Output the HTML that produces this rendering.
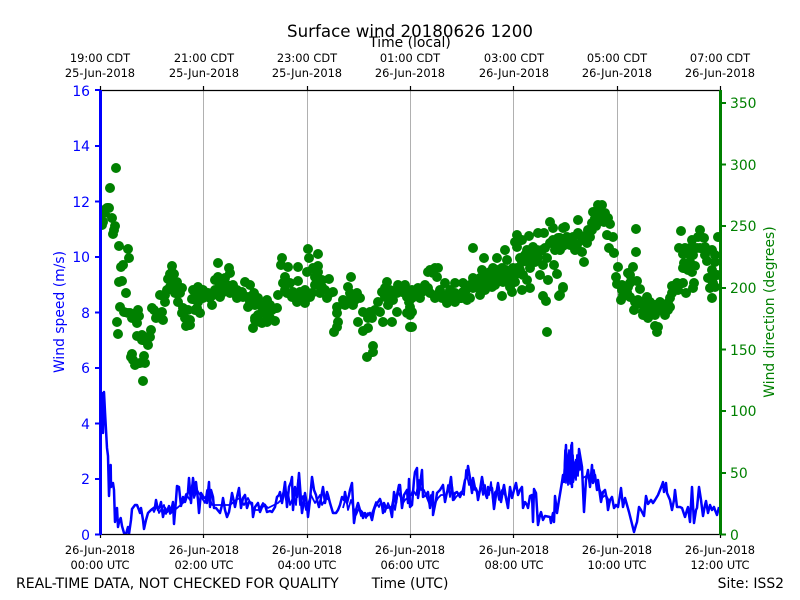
<!DOCTYPE html>
<html><head><meta charset="utf-8"><style>
html,body{margin:0;padding:0;background:#fff}
svg{display:block}
text{font-family:"DejaVu Sans","Liberation Sans",sans-serif}
</style></head><body>
<svg width="800" height="600" viewBox="0 0 800 600" xmlns="http://www.w3.org/2000/svg">
<defs><clipPath id="c"><rect x="100" y="90" width="620" height="444.5"/></clipPath></defs>
<rect width="800" height="600" fill="#fff"/>
<g stroke="#b0b0b0" stroke-width="1"><path d="M203.5 90V534M307.5 90V534M410.5 90V534M513.5 90V534M617.5 90V534"/></g>
<g clip-path="url(#c)">
<path fill="none" stroke="#008000" stroke-width="10" stroke-linecap="round" d="M102 225h0M105 213h0M107 208h0M109 208h0M112 218h0M115 226h0M113 234h0M102 218h0M103 222h0M104 210h0M114 230h0M116 168h0M110 188h0M119 246h0M128 249h0M129 258h0M123 265h0M121 267h0M119 282h0M122 281h0M126 293h0M120 307h0M117 322h0M118 334h0M128 313h0M124 312h0M130 313h0M138 310h0M139 316h0M132 318h0M137 323h0M135 316h0M137 336h0M142 335h0M145 337h0M151 330h0M150 337h0M148 345h0M142 340h0M132 354h0M131 357h0M133 360h0M135 365h0M144 356h0M145 363h0M140 363h0M143 381h0M152 308h0M154 310h0M156 318h0M163 320h0M162 312h0M165 302h0M160 295h0M165 295h0M167 290h0M172 266h0M172 272h0M170 274h0M174 274h0M168 279h0M173 279h0M177 282h0M170 287h0M175 287h0M182 288h0M175 293h0M180 293h0M178 302h0M183 308h0M182 313h0M188 310h0M185 318h0M190 320h0M186 326h0M190 325h0M188 320h0M192 299h0M193 290h0M198 287h0M197 293h0M203 290h0M198 302h0M200 313h0M197 308h0M195 310h0M203 298h0M208 293h0M212 305h0M210 298h0M215 290h0M215 280h0M218 277h0M218 263h0M220 285h0M223 290h0M220 297h0M227 285h0M229 268h0M230 273h0M225 278h0M233 285h0M230 293h0M237 298h0M237 290h0M245 282h0M250 285h0M242 292h0M243 297h0M248 307h0M252 302h0M248 297h0M255 305h0M253 328h0M255 318h0M254 293h0M250 302h0M260 305h0M267 300h0M268 305h0M263 310h0M272 310h0M277 308h0M278 295h0M285 277h0M283 283h0M290 283h0M298 281h0M282 258h0M281 265h0M288 267h0M298 267h0M287 293h0M293 292h0M300 292h0M305 290h0M312 293h0M297 302h0M305 303h0M292 297h0M308 249h0M309 258h0M318 254h0M318 266h0M313 268h0M307 272h0M318 272h0M315 277h0M322 280h0M329 279h0M322 287h0M325 290h0M333 292h0M328 295h0M327 298h0M258 315h0M255 320h0M267 317h0M262 323h0M270 318h0M275 321h0M267 322h0M351 277h0M348 287h0M343 300h0M350 293h0M357 293h0M360 298h0M350 300h0M353 305h0M337 307h0M338 322h0M337 327h0M334 332h0M337 313h0M358 322h0M363 312h0M370 312h0M375 310h0M368 318h0M363 331h0M368 328h0M373 346h0M373 352h0M367 357h0M378 302h0M382 292h0M387 282h0M385 288h0M390 290h0M398 285h0M397 293h0M405 285h0M407 293h0M393 300h0M388 305h0M397 312h0M383 322h0M392 322h0M407 313h0M409 302h0M410 327h0M405 286h0M407 297h0M410 307h0M412 312h0M410 315h0M412 327h0M415 292h0M418 288h0M425 285h0M420 298h0M428 288h0M430 270h0M435 268h0M438 268h0M428 272h0M437 277h0M433 273h0M473 248h0M445 283h0M440 290h0M435 298h0M447 303h0M447 295h0M455 283h0M463 283h0M455 302h0M455 293h0M467 300h0M463 292h0M473 278h0M470 298h0M473 288h0M480 295h0M482 270h0M480 278h0M484 258h0M487 275h0M487 283h0M492 287h0M493 268h0M497 258h0M495 277h0M502 268h0M505 250h0M507 260h0M503 275h0M502 296h0M512 292h0M508 280h0M513 268h0M517 268h0M510 287h0M515 282h0M522 290h0M530 288h0M527 280h0M523 275h0M530 268h0M520 258h0M525 255h0M533 255h0M537 250h0M533 247h0M542 250h0M538 257h0M517 235h0M515 242h0M522 240h0M517 247h0M529 236h0M538 233h0M544 233h0M550 222h0M553 228h0M563 228h0M550 243h0M558 245h0M558 238h0M563 242h0M547 258h0M543 265h0M540 275h0M554 265h0M557 274h0M548 280h0M543 296h0M546 301h0M547 332h0M559 296h0M563 287h0M578 220h0M565 227h0M560 238h0M567 237h0M573 237h0M578 233h0M560 250h0M570 245h0M577 245h0M582 252h0M587 243h0M590 237h0M588 230h0M592 223h0M584 262h0M595 218h0M593 212h0M598 205h0M602 205h0M600 212h0M605 213h0M608 218h0M610 224h0M607 235h0M613 237h0M609 248h0M614 253h0M636 229h0M636 252h0M618 267h0M616 277h0M617 284h0M622 285h0M628 287h0M625 288h0M633 267h0M628 273h0M630 275h0M637 281h0M640 289h0M621 300h0M623 295h0M630 297h0M638 300h0M647 297h0M634 310h0M643 312h0M643 315h0M652 314h0M645 305h0M655 305h0M660 302h0M668 303h0M670 307h0M665 315h0M662 308h0M655 326h0M658 327h0M657 332h0M672 286h0M677 283h0M672 293h0M678 290h0M683 283h0M686 293h0M694 283h0M693 288h0M681 231h0M679 248h0M683 254h0M692 240h0M690 248h0M693 255h0M700 230h0M698 237h0M704 238h0M697 248h0M705 247h0M684 263h0M683 268h0M688 270h0M692 272h0M695 266h0M718 237h0M712 250h0M707 261h0M715 255h0M715 262h0M717 275h0M708 278h0M713 277h0M710 288h0M715 287h0M712 298h0M563 288h0M560 295h0M622 290h0M650 308h0M655 315h0M640 304h0M648 318h0M668 310h0M670 298h0"/>
<path fill="none" stroke="#008000" stroke-width="10" stroke-linecap="round" d="M205 293h0M213 295h0M222 293h0M228 290h0M240 295h0M258 298h0M265 312h0M270 305h0M260 322h0M285 290h0M295 296h0M303 297h0M310 297h0M315 285h0M320 293h0M345 305h0M355 300h0M372 318h0M380 312h0M385 297h0M392 296h0M402 292h0M412 290h0M412 298h0M422 292h0M430 293h0M438 294h0M442 298h0M450 300h0M450 290h0M458 298h0M462 298h0M466 290h0M470 285h0M476 287h0M478 282h0M482 287h0M485 290h0M490 280h0M490 272h0M495 285h0M498 278h0M498 270h0M503 282h0M506 270h0M510 275h0M515 275h0M520 270h0M522 262h0M528 262h0M535 262h0M527 250h0M545 248h0M553 240h0M555 250h0M563 246h0M568 243h0M572 242h0M575 250h0M582 240h0M585 236h0M592 230h0M596 226h0M600 220h0M604 222h0M650 302h0M655 310h0M660 310h0M665 308h0M648 310h0M643 305h0M635 302h0M627 292h0M630 283h0M690 262h0M690 255h0M700 248h0M705 255h0M685 248h0M712 270h0M713 283h0"/>
<g fill="none" stroke="#0000ff" stroke-width="2.5" stroke-linejoin="round">
<polyline points="100.5,367 101,433 102,393 103,433 104,392 105,412 107,448 108,456 109,496 110.7,465 111,487 113,483 114,490 115,522 116,515 117,508 118,527 119,522 120.7,518 122,526 124,533 126,534 128,527 129,534 131,520 132,509 135,505 137,505 139,510 140,513 141,508 143,520 144,529 146,520 148,513 151,510 155,507 156,500 158,510 160,506 161,502 163,517 165,508 167,512 169,506 171,512 173,502 174,524 176,500 177,486 179,487 181,506 183,497 185,502 187,496 188,492 189,478 191,503 193,478 195,493 196,482 198,500 199,513 201,493 204,498 206,497 207,503 209,482 210,507 211,490 213,497 214,508 216,508 220,513 222,505 223,498 225,510 227,517 229,512 231,500 232,493 234,502 235,507 237,497 239,488 241,508 243,498 245,495 247,508 249,502 252,503 253,517 255,507 258,503 260,512 262,507 265,505 267,512 270,511 272,512 275,507 277,497 279,495 280,492 282,503 283,497 285,482 287,507 289,487 291,482 292,477 293,510 295,487 297,497 299,473 301,500 302,513 304,500 305,493 307,505 308,517 310,500 312,477 314,490 316,495 317,500 319,507 321,498 323,487 325,503 327,492 328,495 330,503 333,513 336,513 338,510 340,505 342,497 344,500 345,492 347,503 349,495 350,490 352,483 354,523 356,510 358,503 360,510 362,512 363,518 365,513 367,516 370,513 372,520 374,510 375,507 378,502 380,499 382,505 383,513 384,503 386,508 390,507 392,517 394,492 396,503 397,495 399,485 400,485 402,508 404,495 407,490 408,503 409,479 410,507 412,505 414,480 415,472 417,468 418,498 420,485 422,470 423,497 426,495 428,492 430,508 432,497 433,492 433,515 436,500 437,493 440,490 443,485 445,502 447,492 449,490 451,477 453,500 455,493 457,492 460,497 463,490 465,480 467,476 468,466 470,478 472,493 473,478 475,488 477,492 478,500 480,490 482,477 484,490 487,498 488,487 490,490 492,488 494,509 496,495 498,483 500,495 501,502 503,490 504,485 506,498 508,508 510,487 512,498 514,490 516,483 518,495 520,490 522,487 523,508 525,502 527,505 528,508 530,496 532,495 533,522 534,489 536,493 538,525 540,515 541,512 543,520 545,516 550,517 551,523 553,513 554,522 555,496 557,513 559,500 562,482 563,475 564,482 566,445 567,480 569,453 571,475 572,487 572,443 573,482 575,470 576,460 578,472 579,449 582,467 583,490 584,512 586,480 588,470 590,487 592,465 593,483 595,475 597,490 598,480 600,495 601,502 603,492 605,490 607,500 608,510 610,500 612,497 614,508 616,505 618,507 620,495 621,488 623,507 625,498 627,505 629,512 632,524 634,532 636,525 637,522 639,507 641,510 644,516 646,496 648,504 651,500 653,503 655,500 658,495 660,490 662,485 663,482 664,492 666,483 667,493 670,500 672,510 674,500 675,490 677,507 680,507 682,508 685,517 687,510 688,507 690,522 692,487 694,523 696,510 697,508 699,487 701,500 703,516 705,505 706,501 708,513 710,505 712,510 714,507 715,510 717,515 719,507"/>
<polyline stroke-width="1.8" points="564,480 565,450 566,483 567,455 568,485 569,450 570,484 571,445 572,484 573,455 574,478 575,462 576,480 577,455 578,476 579,452 580,470 581,464 583,478 588,475 591,478 594,470 596,484 599,488 603,497 606,495 610,503"/>
<polyline stroke-width="1.8" points="152,508 154,512 157,505 159,513 164,505 166,514 168,508 170,514 183,503 186,494 190,500 192,485 194,498 197,490 205,503 207,490 212,505 230,505 236,500 240,498 244,505 248,498 254,510 259,510 263,503 268,508 278,503 281,500 284,490 286,500 288,492 290,505 294,495 296,505 298,480 300,505 303,496 306,510 311,495 315,503 320,495 322,505 326,498 329,500"/>
<polyline stroke-width="1.8" points="343,508 346,497 348,510 351,500 356,515 359,508 361,516 364,513 366,518 368,513 371,516 376,502 379,507 381,502 385,512 388,503 391,510 393,500 395,510 398,492 401,498 403,503 405,500 411,495 413,490 416,495 419,480 421,490 424,490 427,498 429,503 431,495 434,505 438,498 441,495 444,495 446,497 448,485 450,497 452,485 454,500 456,497 458,495 461,492 464,495 466,470 469,485 471,480 474,490 476,488 479,495 481,485 483,495 485,485 486,495 489,495 491,482 493,500 495,492 497,490 499,500 502,490 505,495 507,503 509,495 511,490"/>
</g>
</g>
<g stroke="#000" stroke-width="1.2" fill="none"><path d="M100 90.5H720M100 534.5H720M100.5 86V90M203.5 86V90M307.5 86V90M410.5 86V90M513.5 86V90M617.5 86V90M720.5 86V90M100.5 534V538M203.5 534V538M307.5 534V538M410.5 534V538M513.5 534V538M617.5 534V538M720.5 534V538"/></g>
<path stroke="#0000ff" stroke-width="3" fill="none" d="M100.5 90V535"/>
<path stroke="#0000ff" stroke-width="2" fill="none" d="M95 90H100M95 146H100M95 201.500H100M95 257H100M95 312.500H100M95 368H100M95 423.500H100M95 479H100M95 534.500H100"/>
<path stroke="#008000" stroke-width="3" fill="none" d="M720.500 90V535"/>
<path stroke="#008000" stroke-width="2" fill="none" d="M721 103H726M721 164.500H726M721 226H726M721 288H726M721 349.500H726M721 411H726M721 473H726M721 534.500H726"/>
<g font-size="16.670" fill="#000" text-anchor="middle"><text x="410" y="37">Surface wind 20180626 1200</text></g>
<g font-size="13.900" fill="#000" text-anchor="middle"><text x="410" y="47">Time (local)</text><text x="410" y="588">Time (UTC)</text></g>
<g font-size="11.400" fill="#000" text-anchor="middle">
<text x="100" y="62">19:00 CDT</text><text x="100" y="77">25-Jun-2018</text>
<text x="204" y="62">21:00 CDT</text><text x="204" y="77">25-Jun-2018</text>
<text x="307" y="62">23:00 CDT</text><text x="307" y="77">25-Jun-2018</text>
<text x="410" y="62">01:00 CDT</text><text x="410" y="77">26-Jun-2018</text>
<text x="514" y="62">03:00 CDT</text><text x="514" y="77">26-Jun-2018</text>
<text x="617" y="62">05:00 CDT</text><text x="617" y="77">26-Jun-2018</text>
<text x="720" y="62">07:00 CDT</text><text x="720" y="77">26-Jun-2018</text>
<text x="100" y="554">26-Jun-2018</text><text x="100" y="569">00:00 UTC</text>
<text x="204" y="554">26-Jun-2018</text><text x="204" y="569">02:00 UTC</text>
<text x="307" y="554">26-Jun-2018</text><text x="307" y="569">04:00 UTC</text>
<text x="410" y="554">26-Jun-2018</text><text x="410" y="569">06:00 UTC</text>
<text x="514" y="554">26-Jun-2018</text><text x="514" y="569">08:00 UTC</text>
<text x="617" y="554">26-Jun-2018</text><text x="617" y="569">10:00 UTC</text>
<text x="720" y="554">26-Jun-2018</text><text x="720" y="569">12:00 UTC</text>
</g>
<text x="16" y="588" font-size="14.030" fill="#000">REAL-TIME DATA, NOT CHECKED FOR QUALITY</text>
<text x="784" y="588" font-size="13.900" fill="#000" text-anchor="end">Site: ISS2</text>
<g font-size="13.900" fill="#0000ff" text-anchor="end">
<text x="90" y="96">16</text><text x="90" y="151">14</text><text x="90" y="207">12</text><text x="90" y="262">10</text><text x="90" y="318">8</text><text x="90" y="373">6</text><text x="90" y="429">4</text><text x="90" y="484">2</text><text x="90" y="540">0</text>
</g>
<g font-size="13.900" fill="#008000">
<text x="730" y="108">350</text><text x="730" y="170">300</text><text x="730" y="231">250</text><text x="730" y="293">200</text><text x="730" y="355">150</text><text x="730" y="416">100</text><text x="730" y="478">50</text><text x="730" y="540">0</text>
</g>
<text transform="translate(64 312) rotate(-90)" font-size="13.900" fill="#0000ff" text-anchor="middle">Wind speed (m/s)</text>
<text transform="translate(774 312) rotate(-90)" font-size="13.900" fill="#008000" text-anchor="middle">Wind direction (degrees)</text>
</svg>
</body></html>
